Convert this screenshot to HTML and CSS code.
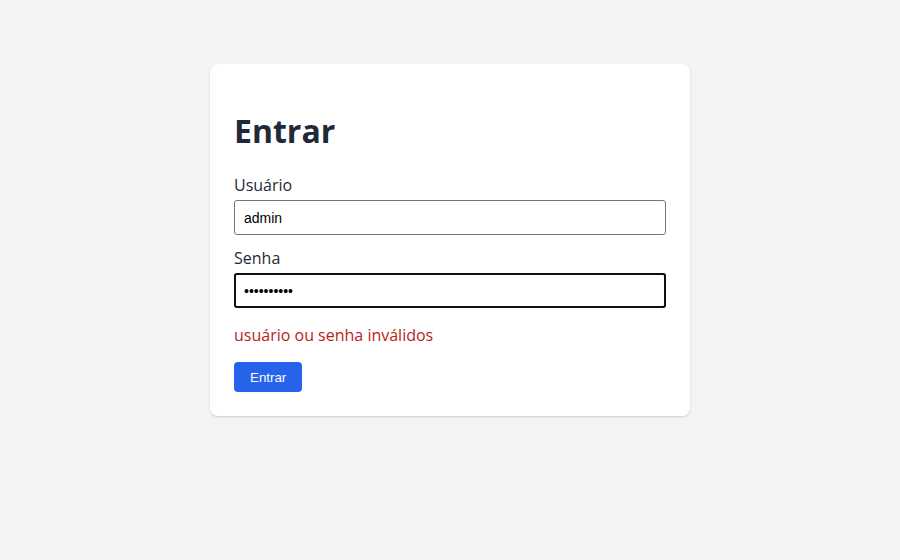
FILE: index.html
```html
<!DOCTYPE html>
<html lang="pt-BR">
<head>
<meta charset="utf-8">
<title>Entrar</title>
<link rel="stylesheet" href="styles.css">
</head>
<body>
<main class="page">
  <form class="card">
    <h1 class="title">Entrar</h1>
    <div class="field">
      <label class="label" for="user">Usuário</label>
      <input class="input" id="user" type="text" value="admin">
    </div>
    <div class="field">
      <label class="label" for="pass">Senha</label>
      <input class="input input-focused" id="pass" type="password" value="1234567890">
    </div>
    <p class="error">usuário ou senha inválidos</p>
    <button class="button" type="button">Entrar</button>
  </form>
</main>
</body>
</html>
```

FILE: styles.css
```css
* { box-sizing: border-box; }
html, body {
  margin: 0;
  padding: 0;
  background: #f3f4f6;
  font-family: "Open Sans", "Liberation Sans", sans-serif;
  color: #1f2937;
}
.page {
  display: flex;
  justify-content: center;
  padding-top: 64px;
  min-height: 560px;
}
.card {
  width: 480px;
  align-self: flex-start;
  background: #ffffff;
  border-radius: 8px;
  padding: 24px;
  box-shadow: 0 1px 3px rgba(0, 0, 0, 0.1), 0 1px 2px rgba(0, 0, 0, 0.06);
}
.title {
  margin: 19px 0 18px;
  font-size: 32px;
  line-height: 48px;
  font-weight: 700;
  color: #1f2937;
}
.field {
  display: flex;
  flex-direction: column;
  margin-bottom: 11px;
}
.label {
  font-size: 16px;
  line-height: 24px;
  margin-bottom: 3px;
}
.input {
  height: 35px;
  padding: 0 9px;
  font-family: "Liberation Sans", Arial, sans-serif;
  font-size: 14px;
  color: #000;
  border: 1px solid #767676;
  border-radius: 3px;
  background: #fff;
}
.input-focused {
  outline: 2px solid #101010;
  outline-offset: -2px;
  border-radius: 3px;
}
.error {
  margin: 15px 0 15px;
  font-size: 16px;
  line-height: 24px;
  color: #b91c1c;
}
.button {
  display: block;
  height: 30px;
  padding: 0 16px;
  border: none;
  border-radius: 4px;
  background: #2563eb;
  color: #fff;
  font-family: "Liberation Sans", Arial, sans-serif;
  font-size: 13.33px;
}
```
